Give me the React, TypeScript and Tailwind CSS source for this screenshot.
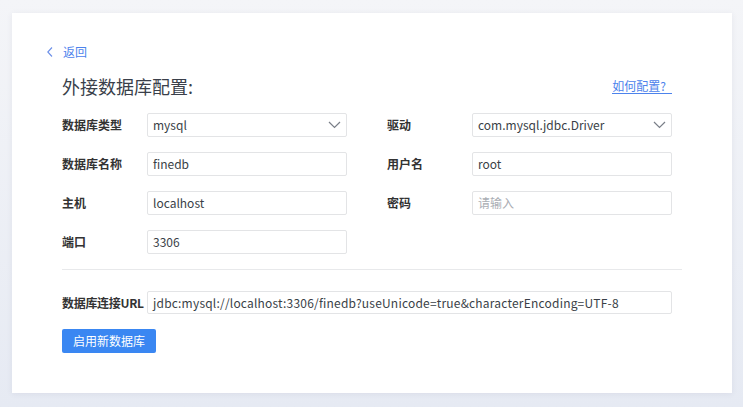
const cn = { fontFamily: '"Noto Sans CJK SC", "Noto Sans", sans-serif' };

function Chevron() {
  return (
    <svg width="13" height="8" viewBox="0 0 13 8" fill="none" className="shrink-0">
      <path d="M1 1l5.5 5.5L12 1" stroke="#7a7f88" strokeWidth="1.2" />
    </svg>
  );
}

function Field({ value, placeholder, select }: { value?: string; placeholder?: string; select?: boolean }) {
  return (
    <div className="flex h-[24px] w-[200px] items-center justify-between rounded-[2px] border border-[#e3e4e6] bg-white pl-[5px] pr-[5px]">
      <span className={`text-[12px] leading-none ${value ? "text-[#3a3f47]" : "text-[#a9adb3]"}`}>
        {value ?? placeholder}
      </span>
      {select && <Chevron />}
    </div>
  );
}

function Row({ label, children }: { label: string; children: React.ReactNode }) {
  return (
    <div className="flex items-center">
      <div className="w-[85px] text-[12px] font-bold text-[#333]">{label}</div>
      {children}
    </div>
  );
}

export default function App() {
  return (
    <div
      className="h-[407px] w-full bg-gradient-to-b from-[#f4f5f8] to-[#e6eaf3] pl-[12px] pr-[11px] pt-[13px]"
      style={cn}
    >
      <div className="h-[380px] bg-white pl-[35px] pt-[31px] shadow-[0_1px_6px_rgba(60,70,100,0.08)]">
        <div className="flex h-[16px] items-center gap-[10px] text-[12px] text-[#4d83ec]">
          <svg width="6" height="10" viewBox="0 0 6 10" fill="none">
            <path d="M5 0.5L0.8 5 5 9.5" stroke="#6b8fe8" strokeWidth="1.1" />
          </svg>
          <span>返回</span>
        </div>

        <div className="w-[635px] pl-[15px]">
          <div className="mt-[14px] flex h-[24px] items-center justify-between">
            <h1 className="text-[18px] font-normal text-[#3a3f4a]">外接数据库配置:</h1>
            <a className="mr-[10px] border-b border-[#4d83ec] pr-[6px] text-[12px] leading-[15px] text-[#4d83ec]">
              如何配置?
            </a>
          </div>

          <div className="mt-[15px] grid grid-cols-[285px_285px] gap-x-[40px] gap-y-[15px]">
            <Row label="数据库类型">
              <Field value="mysql" select />
            </Row>
            <Row label="驱动">
              <Field value="com.mysql.jdbc.Driver" select />
            </Row>
            <Row label="数据库名称">
              <Field value="finedb" />
            </Row>
            <Row label="用户名">
              <Field value="root" />
            </Row>
            <Row label="主机">
              <Field value="localhost" />
            </Row>
            <Row label="密码">
              <Field placeholder="请输入" />
            </Row>
            <Row label="端口">
              <Field value="3306" />
            </Row>
          </div>

          <div className="mt-[15px] h-px w-[620px] bg-[#e8e9eb]" />

          <div className="mt-[21px] flex items-center">
            <div className="w-[85px] shrink-0 whitespace-nowrap text-[12px] font-bold tracking-[-0.3px] text-[#333]">
              数据库连接URL
            </div>
            <div className="flex h-[23px] w-[525px] items-center rounded-[2px] border border-[#e3e4e6] pl-[5px] text-[12px] tracking-[0.2px] text-[#3a3f47]">
              jdbc:mysql://localhost:3306/finedb?useUnicode=true&amp;characterEncoding=UTF-8
            </div>
          </div>

          <button className="mt-[15px] h-[24px] w-[94px] rounded-[2px] bg-[#3a87f2] text-[12px] text-white">
            启用新数据库
          </button>
        </div>
      </div>
    </div>
  );
}
